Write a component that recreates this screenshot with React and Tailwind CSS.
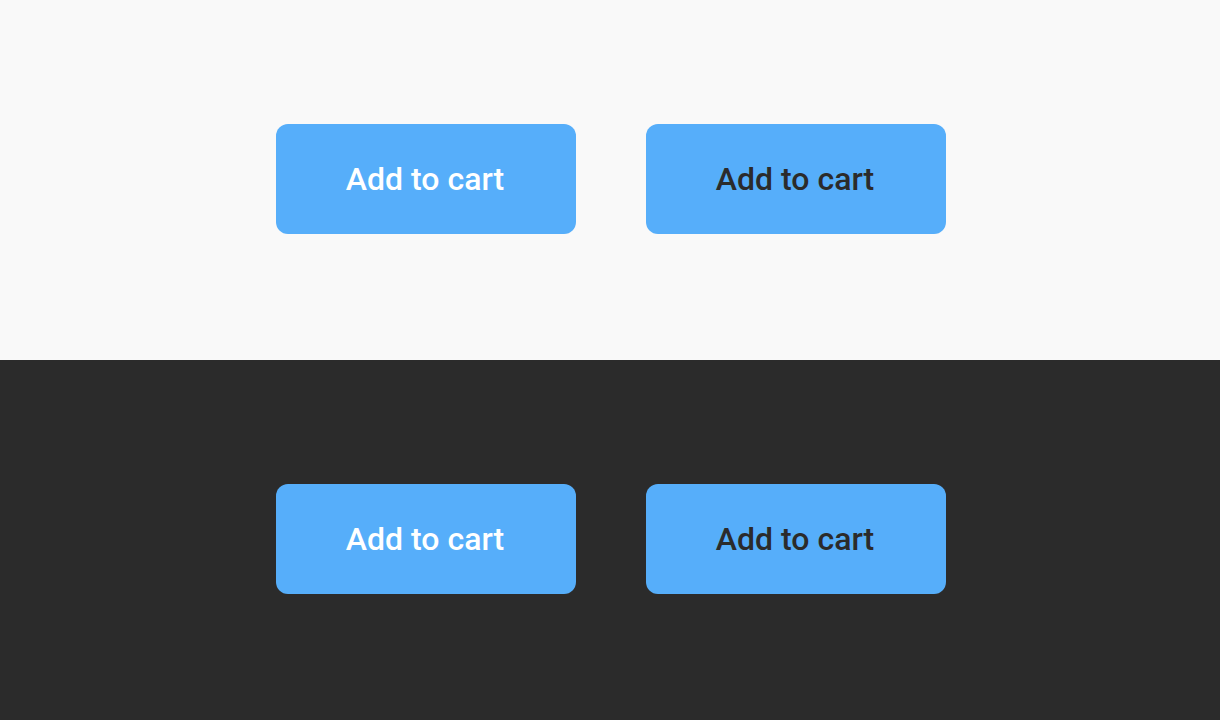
import React from "react";

function CartButton({ dark }) {
  return (
    <button
      className={
        "w-[300px] h-[110px] rounded-xl bg-[#56aefa] text-[32px] font-medium flex items-center justify-center pr-[2px] " +
        (dark ? "text-[#2b2b2b]" : "text-white")
      }
    >
      Add to cart
    </button>
  );
}

export default function App() {
  return (
    <div className="w-[1220px] h-[720px] flex flex-col font-['Roboto',sans-serif]">
      <div className="h-[360px] bg-[#f9f9f9] flex items-center justify-center gap-[70px] pb-[2px] pl-[2px]">
        <CartButton />
        <CartButton dark />
      </div>
      <div className="h-[360px] bg-[#2b2b2b] flex items-center justify-center gap-[70px] pb-[2px] pl-[2px]">
        <CartButton />
        <CartButton dark />
      </div>
    </div>
  );
}
